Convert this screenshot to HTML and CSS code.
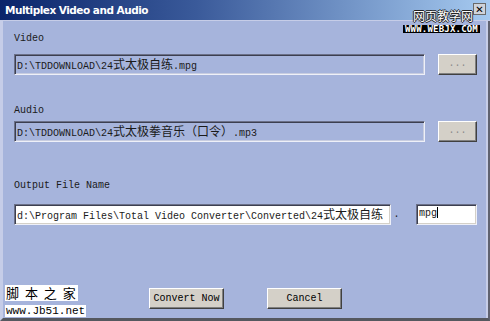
FILE: index.html
```html
<!DOCTYPE html>
<html>
<head>
<meta charset="utf-8">
<link rel="stylesheet" href="styles.css">
</head>
<body>
<div class="window">
  <div class="titlebar">
    <span class="title">Multiplex Video and Audio</span>
    <span class="close">✕</span>
  </div>
  <div class="content">
    <div class="label label-video">Video</div>
    <div class="row">
      <div class="field field-path">D:\TDDOWNLOAD\24<span class="cjk">式太极自练</span>.mpg</div>
      <div class="btn btn-browse">...</div>
    </div>
    <div class="label label-audio">Audio</div>
    <div class="row">
      <div class="field field-path">D:\TDDOWNLOAD\24<span class="cjk">式太极拳音乐（口令）</span>.mp3</div>
      <div class="btn btn-browse">...</div>
    </div>
    <div class="label label-output">Output File Name</div>
    <div class="row">
      <div class="field field-out">d:\Program Files\Total Video Converter\Converted\24<span class="cjk">式太极自练</span></div>
      <span class="dot">.</span>
      <div class="field field-ext">mpg<span class="caret"></span></div>
    </div>
    <div class="actions">
      <div class="btn btn-action">Convert Now</div>
      <div class="btn btn-action">Cancel</div>
    </div>
  </div>
  <div class="wm-top">
    <div class="wm-top-cn">网页教学网</div>
    <div class="wm-top-en">WWW.WEBJX.COM</div>
  </div>
  <div class="wm-bottom">
    <div class="wm-bottom-cn">脚 本 之 家</div>
    <div class="wm-bottom-en">www.Jb51.net</div>
  </div>
</div>
</body>
</html>
```

FILE: styles.css
```css
* { box-sizing: border-box; }
html, body { margin: 0; padding: 0; }
body { width: 490px; height: 321px; overflow: hidden; background: #a6b4dc; }

.window {
  position: relative;
  width: 490px;
  height: 321px;
  background: #a6b4dc;
  border-left: 3px solid #c6cde8;
  border-right: 2px solid #5f6270;
  border-bottom: 3px solid #55585f;
  box-shadow: inset -2px 0 0 #c6cde8;
  font-family: "Liberation Mono", "Noto Sans CJK SC", monospace;
  font-size: 10px;
  color: #1a1a1a;
}

.titlebar {
  height: 21px;
  margin-left: -3px;
  margin-right: -2px;
  background: linear-gradient(to right, #0a246a 0%, #3a5a9a 40%, #a6caf0 100%);
  border-bottom: 1px solid #c6cde8;
  display: flex;
  align-items: center;
  justify-content: space-between;
  padding: 0 4px 0 5px;
}
.title {
  color: #fff;
  font-family: "DejaVu Sans", sans-serif;
  font-weight: bold;
  font-size: 10.5px;
  letter-spacing: -0.5px;
  margin-top: -1px;
}
.close {
  width: 13px;
  height: 12px;
  background: #cfd3da;
  color: #000;
  font-family: "DejaVu Sans", sans-serif;
  font-size: 10px;
  font-weight: bold;
  line-height: 11px;
  text-align: center;
  border: 1px solid #6a6a6a;
  margin-bottom: 3px;
}

.content {
  padding: 12px 0 0 11px;
}

.label { height: 12px; line-height: 12px; white-space: pre; }
.label-video { margin-bottom: 9px; }
.label-audio { margin-top: 30px; margin-bottom: 4px; }
.label-output { margin-top: 38px; margin-bottom: 12px; }

.row { display: flex; align-items: flex-start; height: 21px; }

.field {
  height: 21px;
  line-height: 17px;
  padding: 0 2px;
  border-top: 1px solid #6b7088;
  border-left: 1px solid #6b7088;
  border-bottom: 1px solid #eef0f8;
  border-right: 1px solid #eef0f8;
  box-shadow: inset 1px 1px 0 #3c3f50, inset -1px -1px 0 #c8cde0;
  white-space: nowrap;
  overflow: hidden;
}
.field-path { width: 411px; background: #a6b4dc; }
.field-out { width: 377px; background: #fff; box-shadow: inset 1px 1px 0 #3c3f50, inset -1px -1px 0 #d4d0c8; }
.field-ext { width: 61px; margin-left: 14px; background: #fff; box-shadow: inset 1px 1px 0 #3c3f50, inset -1px -1px 0 #d4d0c8; }
.cjk { font-size: 12px; font-family: "Noto Sans CJK SC", sans-serif; }
.caret { display: inline-block; width: 1px; height: 11px; background: #000; vertical-align: -2px; }
.dot { width: 11px; text-align: center; line-height: 20px; padding-top: 1px; }

.btn {
  background: #d4d0c8;
  border-top: 1px solid #fff;
  border-left: 1px solid #fff;
  border-right: 1px solid #404040;
  border-bottom: 1px solid #404040;
  box-shadow: inset -1px -1px 0 #808080;
  text-align: center;
  color: #000;
}
.btn-browse {
  width: 39px;
  height: 21px;
  margin-left: 13px;
  line-height: 17px;
  color: #8a8a8a;
}
.actions {
  display: flex;
  gap: 43px;
  margin-top: 63px;
  padding-left: 135px;
}
.btn-action {
  width: 75px;
  height: 21px;
  line-height: 19px;
  font-size: 10px;
}

.wm-top {
  position: absolute;
  top: 8px;
  right: 8px;
  display: flex;
  flex-direction: column;
  align-items: flex-end;
}
.wm-top-cn {
  font-family: "Noto Sans CJK SC", sans-serif;
  font-size: 12px;
  line-height: 15px;
  color: #fff;
  text-shadow: 1px 0 0 #222, -1px 0 0 #222, 0 1px 0 #222, 0 -1px 0 #222;
  margin-right: 7px;
  margin-bottom: 2px;
}
.wm-top-en {
  background: #000;
  color: #fff;
  font-family: "DejaVu Sans Mono", monospace;
  font-weight: bold;
  font-size: 9px;
  line-height: 8px;
  padding: 0 2px;
  letter-spacing: 0.2px;
}

.wm-bottom {
  position: absolute;
  left: 2px;
  bottom: 1px;
  display: flex;
  flex-direction: column;
  align-items: flex-start;
}
.wm-bottom-cn {
  font-family: "Noto Sans CJK SC", sans-serif;
  font-size: 13px;
  line-height: 16px;
  color: #000;
  background: #fff;
  padding: 0 1px;
  margin-bottom: 4px;
  letter-spacing: 1.5px;
  white-space: pre;
}
.wm-bottom-en {
  font-family: "Liberation Mono", monospace;
  font-size: 11px;
  line-height: 12px;
  color: #000;
  background: #fff;
  padding: 0 1px;
}
```
